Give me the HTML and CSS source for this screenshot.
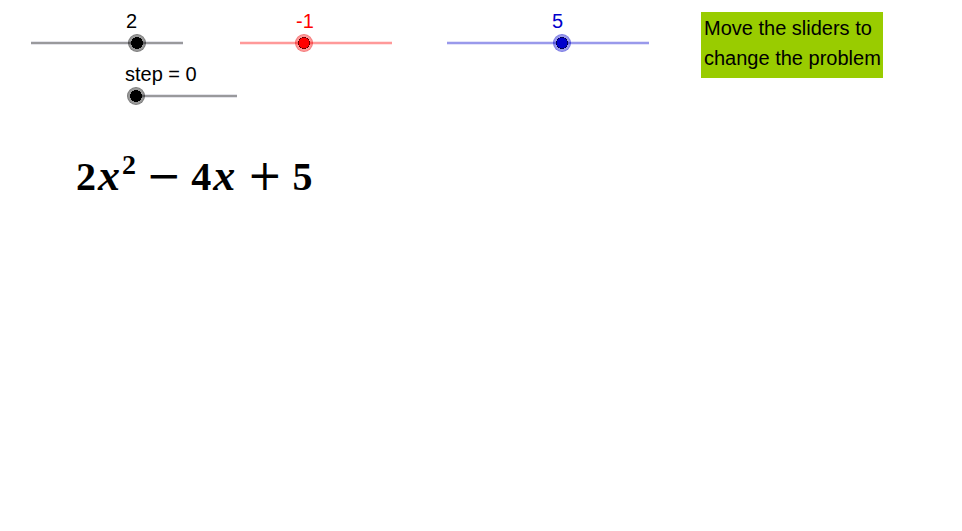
FILE: index.html
```html
<!DOCTYPE html>
<html lang="en">
    <head>
        <meta charset="UTF-8">
        <title>Completing the Square</title>
        <link rel="stylesheet" href="styles.css">
    </head>
    <body>
        <div class="controls">
            <div class="slider black">
                <label for="a">2</label>
                <input type="range" id="a" min="-5" max="5" value="2">
            </div>
            <div class="slider red">
                <label for="b">-1</label>
                <input type="range" id="b" min="-6" max="6" value="-1">
            </div>
            <div class="slider blue">
                <label for="c">5</label>
                <input type="range" id="c" min="-3" max="11" value="5">
            </div>
            <p class="note">Move the sliders to<br>change the problem</p>
            <div class="slider black step">
                <label for="step">step = 0</label>
                <input type="range" id="step" min="0" max="5" value="0">
            </div>
        </div>
        <div class="formula">
            <span>2<i>x</i><sup>2</sup></span>
            <span class="op">−</span>
            <span>4<i>x</i></span>
            <span class="op">+</span>
            <span>5</span>
        </div>
    </body>
</html>
```

FILE: styles.css
```css
body {
    margin: 0;
    background-color: white;
    font-family: "Liberation Sans", Arial, sans-serif;
    font-size: 20px;
    color: black;
}
.controls {
    display: grid;
    grid-template-columns: 209fr 207fr 262fr 261fr;
    grid-template-rows: auto auto;
    row-gap: 9px;
    padding: 9px 0 0 23px;
}
.slider {
    display: flex;
    flex-direction: column;
    align-items: flex-start;
}
.slider label {
    line-height: 24px;
    padding-left: 103px;
}
.red label {
    padding-left: 64px;
}
.blue label {
    padding-left: 113px;
}
.step {
    grid-column: 1 / 3;
    grid-row: 2;
    margin-left: 102px;
}
.step label {
    padding-left: 0;
}
.black {
    --line: #99999c;
    --edge: #e4e4ea;
    --ring: rgba(0, 0, 0, 0.4);
    --border: rgba(0, 0, 0, 0.2);
    --dot: black;
}
.red {
    --line: #ff9999;
    --edge: #ffe4e4;
    --ring: rgba(255, 0, 0, 0.4);
    --border: rgba(200, 0, 0, 0.2);
    --dot: red;
    color: red;
}
.blue {
    --line: #9999eb;
    --edge: #e4e4fa;
    --ring: rgba(0, 0, 204, 0.4);
    --border: rgba(0, 0, 204, 0.2);
    --dot: #0000cc;
    color: #0000cc;
}
input[type=range] {
    appearance: none;
    width: 168px;
    height: 20px;
    margin: 0;
    background:
        linear-gradient(var(--line), var(--line)) center / calc(100% - 16px) 2px no-repeat,
        linear-gradient(var(--edge), var(--edge)) center / calc(100% - 16px) 4px no-repeat;
    cursor: pointer;
}
.blue input[type=range] {
    width: 218px;
}
.step input[type=range] {
    width: 118px;
    margin-left: 2px;
}
input[type=range]::-webkit-slider-thumb {
    appearance: none;
    box-sizing: border-box;
    width: 18px;
    height: 18px;
    border: 1px solid var(--border);
    border-radius: 50%;
    background: radial-gradient(circle, var(--dot) 5px, black 6px, var(--ring) 6px);
}
.note {
    grid-column: 4;
    grid-row: 1 / 3;
    justify-self: start;
    align-self: start;
    margin: 3px 0 0;
    padding: 1px 2px 5px 3px;
    line-height: 30px;
    background-color: #99cc00;
}
.formula {
    display: flex;
    align-items: baseline;
    gap: 10px;
    padding: 40px 0 0 76px;
    font-family: "Liberation Serif", "Times New Roman", serif;
    font-size: 40px;
    line-height: 60px;
    font-weight: bold;
}
.formula i {
    padding: 0 2px;
    font-size: 44px;
    line-height: 0;
}
.formula sup {
    font-size: 28px;
    line-height: 0;
    vertical-align: 16px;
}
.formula .op {
    font-family: "DejaVu Serif", serif;
    font-size: 42px;
    font-weight: normal;
}
```
